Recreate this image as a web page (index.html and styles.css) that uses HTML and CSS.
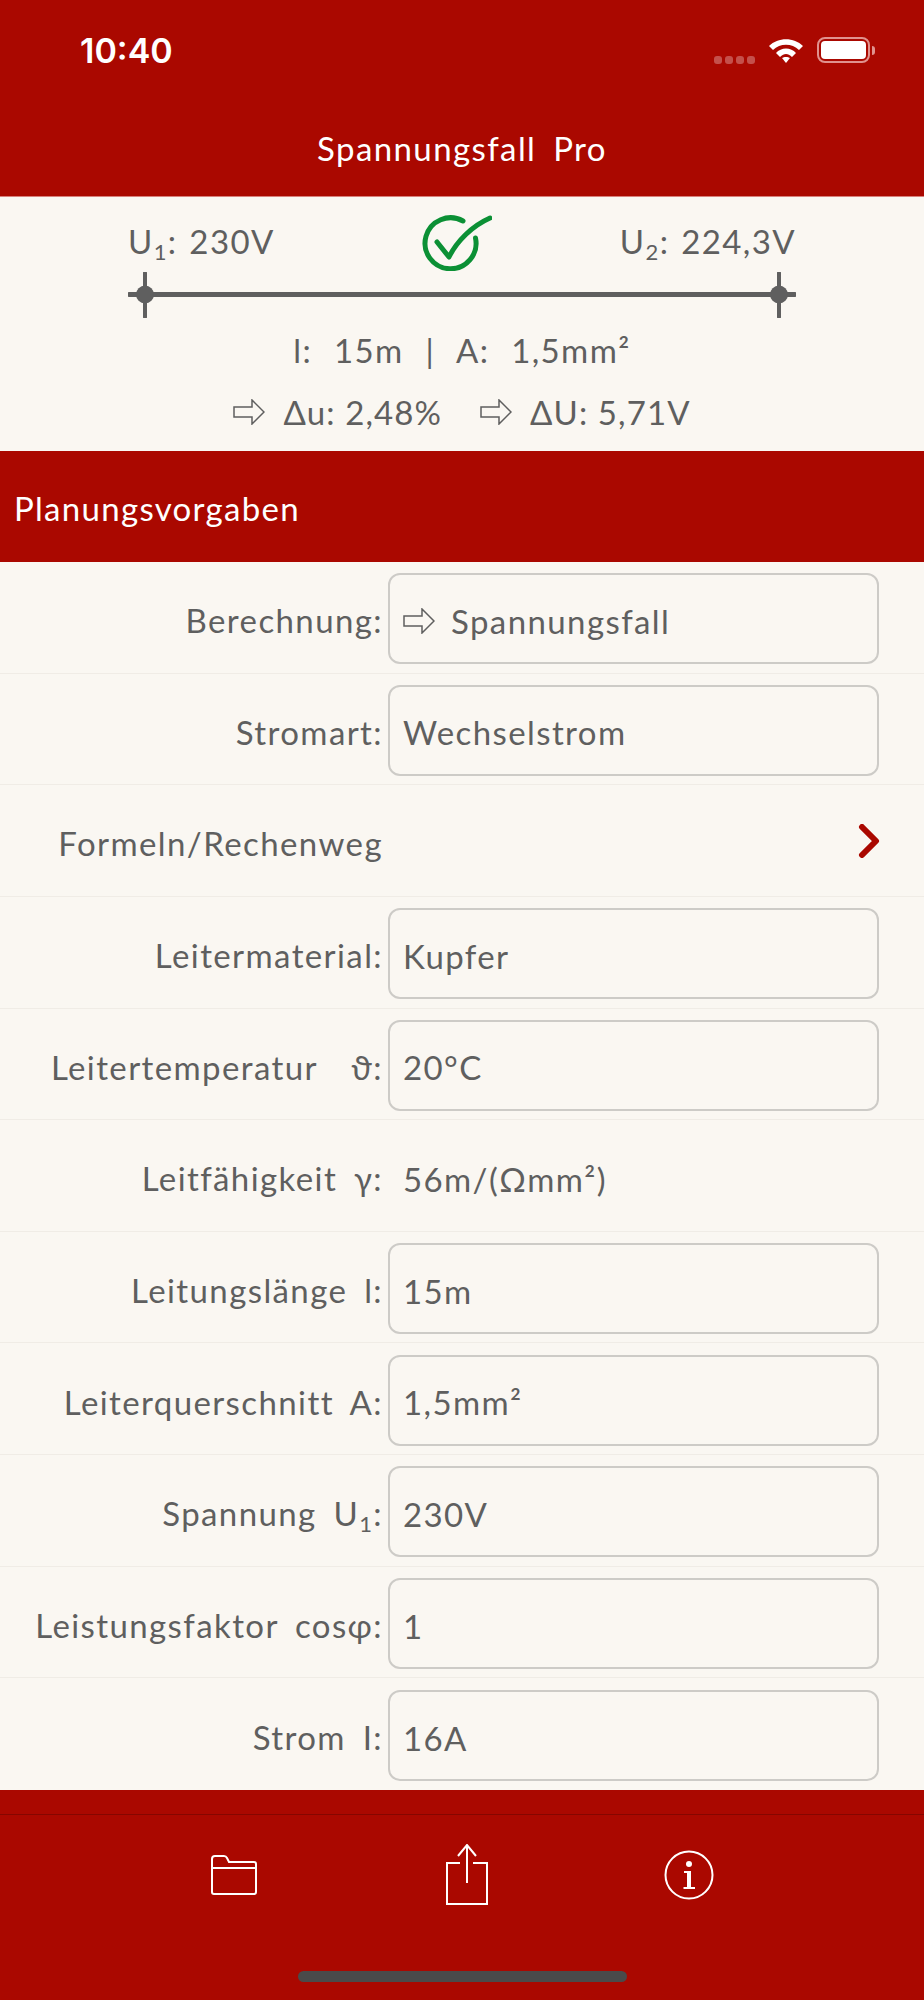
FILE: index.html
```html
<!DOCTYPE html>
<html lang="de">
<head>
    <meta charset="UTF-8">
    <meta name="viewport" content="width=device-width, initial-scale=1.0">
    <title>Spannungsfall Pro</title>
    <link rel="stylesheet" href="styles.css">
</head>
<body>
    <header class="app-header">
        <div class="status-bar">
            <span class="status-time">10:40</span>
            <div class="status-icons">
                <div class="signal-dots"><i></i><i></i><i></i><i></i></div>
                <svg class="wifi-icon" width="36" height="26" viewBox="0 0 36 26">
                    <path d="M1 9 C10 0 26 0 35 9 L31 13 C24 6 12 6 5 13 Z" fill="#fff"/>
                    <path d="M8 16 C13 10 23 10 28 16 L24 20 C20 16 16 16 12 20 Z" fill="#fff"/>
                    <path d="M14 21 C16 19.500 20 19.500 22 21 L18 26 Z" fill="#fff"/>
                </svg>
                <div class="battery"><div class="battery-fill"></div></div>
                <div class="battery-nub"></div>
            </div>
        </div>
        <div class="app-title">Spannungsfall Pro</div>
    </header>

    <section class="summary">
        <div class="voltage-row">
            <span>U<sub>1</sub>: 230V</span>
            <svg class="check-icon" width="70" height="56" viewBox="0 0 70 56">
                <path d="M41 6 A25.500 25.500 0 1 0 53.500 23" fill="none" stroke="#0b9035" stroke-width="5" stroke-linecap="round"/>
                <path d="M15 27 L27 42 C35 26 50 11 68 3" fill="none" stroke="#0b9035" stroke-width="5" stroke-linecap="round" stroke-linejoin="round"/>
            </svg>
            <span class="voltage-end">U<sub>2</sub>: 224,3V</span>
        </div>
        <svg class="wire" width="668" height="46" viewBox="0 0 668 46">
            <path d="M1 22.500 H667" stroke="#5f5f5f" stroke-width="5" stroke-linecap="round"/>
            <path d="M17 1 V45 M651 1 V45" stroke="#5f5f5f" stroke-width="4" stroke-linecap="round"/>
            <circle cx="17" cy="22.500" r="9" fill="#5f5f5f"/>
            <circle cx="651" cy="22.500" r="9" fill="#5f5f5f"/>
        </svg>
        <div class="summary-line length-line">l: 15m | A: 1,5mm²</div>
        <div class="summary-line result-line">
            <span class="result">
                <svg class="arrow-icon" width="32" height="26" viewBox="0 0 32 26"><path d="M1 8 H19 V1 L31 13 L19 25 V18 H1 Z" fill="none" stroke="#5f5f5f" stroke-width="1.500"/></svg>
                Δu: 2,48%
            </span>
            <span class="result">
                <svg class="arrow-icon" width="32" height="26" viewBox="0 0 32 26"><path d="M1 8 H19 V1 L31 13 L19 25 V18 H1 Z" fill="none" stroke="#5f5f5f" stroke-width="1.500"/></svg>
                ΔU: 5,71V
            </span>
        </div>
    </section>

    <h2 class="section-title">Planungsvorgaben</h2>

    <main class="form-list">
        <div class="form-row">
            <label>Berechnung:</label>
            <div class="field">
                <svg class="arrow-icon" width="32" height="26" viewBox="0 0 32 26"><path d="M1 8 H19 V1 L31 13 L19 25 V18 H1 Z" fill="none" stroke="#5f5f5f" stroke-width="1.500"/></svg>
                Spannungsfall
            </div>
        </div>
        <div class="form-row">
            <label>Stromart:</label>
            <div class="field">Wechselstrom</div>
        </div>
        <div class="form-row link-row">
            <label>Formeln/Rechenweg</label>
            <svg class="chevron" width="24" height="34" viewBox="0 0 24 34"><path d="M5 3 L19 17 L5 31" fill="none" stroke="#aa0800" stroke-width="6" stroke-linecap="round" stroke-linejoin="round"/></svg>
        </div>
        <div class="form-row">
            <label>Leitermaterial:</label>
            <div class="field">Kupfer</div>
        </div>
        <div class="form-row">
            <label>Leitertemperatur &nbsp;ϑ:</label>
            <div class="field">20°C</div>
        </div>
        <div class="form-row">
            <label>Leitfähigkeit γ:</label>
            <div class="field plain">56m/(Ωmm²)</div>
        </div>
        <div class="form-row">
            <label>Leitungslänge l:</label>
            <div class="field">15m</div>
        </div>
        <div class="form-row">
            <label>Leiterquerschnitt A:</label>
            <div class="field">1,5mm²</div>
        </div>
        <div class="form-row">
            <label>Spannung U<sub>1</sub>:</label>
            <div class="field">230V</div>
        </div>
        <div class="form-row">
            <label>Leistungsfaktor cosφ:</label>
            <div class="field">1</div>
        </div>
        <div class="form-row">
            <label>Strom I:</label>
            <div class="field">16A</div>
        </div>
    </main>

    <footer class="toolbar">
        <div class="toolbar-icons">
            <svg width="48" height="42" viewBox="0 0 48 42">
                <path d="M2 5 Q2 2 5 2 H14 Q16 2 17 4 L19 8 H44 Q46 8 46 10 V38 Q46 40 44 40 H4 Q2 40 2 38 Z M2 14 H46" fill="none" stroke="#fff" stroke-width="2"/>
            </svg>
            <svg width="44" height="62" viewBox="0 0 44 62">
                <path d="M15 19 H2 V60 H42 V19 H28" fill="none" stroke="#fff" stroke-width="2"/>
                <path d="M22 1 V39 M13 12 L22 1 L31 12" fill="none" stroke="#fff" stroke-width="2"/>
            </svg>
            <svg width="50" height="50" viewBox="0 0 50 50">
                <circle cx="25" cy="25" r="23.500" fill="none" stroke="#fff" stroke-width="2"/>
                <circle cx="25" cy="14" r="3" fill="#fff"/>
                <path d="M20 21 H27 V37 H31 V39 H19.500 V37 H23 V23 H20 Z" fill="#fff"/>
            </svg>
        </div>
        <div class="home-bar"></div>
    </footer>
</body>
</html>
```

FILE: styles.css
```css
html, body {
    margin: 0;
    padding: 0;
}
body {
    width: 924px;
    height: 2000px;
    display: flex;
    flex-direction: column;
    background-color: #faf7f2;
    color: #5f5f5f;
    font-family: "Lato", "Noto Sans", sans-serif;
    font-size: 33px;
    letter-spacing: 1.4px;
    word-spacing: 7px;
}
sub {
    font-size: 22px;
    line-height: 0;
    vertical-align: -6px;
}
.app-header {
    height: 196px;
    background-color: #aa0800;
    border-bottom: 1px solid #d9807b;
    color: #fff;
}
.status-bar {
    height: 100px;
    display: flex;
    justify-content: space-between;
    padding: 31px 49px 0 80px;
    box-sizing: border-box;
}
.status-time {
    font-family: "Inter", sans-serif;
    font-size: 34px;
    font-weight: 600;
    letter-spacing: 0;
    line-height: 40px;
}
.status-icons {
    display: flex;
    align-items: flex-start;
    padding-top: 6px;
}
.signal-dots {
    display: flex;
    gap: 3px;
    margin: 19px 13px 0 0;
}
.signal-dots i {
    width: 8px;
    height: 8px;
    border-radius: 3px;
    background-color: #c4504b;
}
.battery {
    width: 53px;
    height: 26px;
    margin-left: 13px;
    padding: 2px;
    box-sizing: border-box;
    border: 2px solid #e0928e;
    border-radius: 8px;
}
.battery-fill {
    height: 100%;
    background-color: #fff;
    border-radius: 4px;
}
.battery-nub {
    width: 3px;
    height: 9px;
    margin: 9px 0 0 2px;
    background-color: #e0928e;
    border-radius: 0 3px 3px 0;
}
.app-title {
    text-align: center;
    line-height: 50px;
    margin-top: 23px;
}
.summary {
    height: 254px;
    display: flex;
    flex-direction: column;
    align-items: center;
}
.voltage-row {
    width: 668px;
    height: 75px;
    display: grid;
    grid-template-columns: 1fr auto 1fr;
    align-items: start;
    line-height: 40px;
    padding-top: 24px;
    box-sizing: border-box;
    word-spacing: 2px;
}
.voltage-end {
    text-align: right;
}
.check-icon {
    margin: -6px 10px 0 0;
}
.wire {
    display: block;
}
.summary-line {
    display: flex;
    justify-content: center;
    line-height: 40px;
    margin-top: 12px;
}
.length-line {
    word-spacing: 12px;
}
.result-line {
    gap: 38px;
    margin-top: 22px;
    word-spacing: 0;
    letter-spacing: 1.1px;
}
.result {
    display: flex;
    align-items: center;
    gap: 18px;
}
.section-title {
    margin: 0;
    height: 111px;
    padding: 3px 0 0 14px;
    box-sizing: border-box;
    display: flex;
    align-items: center;
    background-color: #aa0800;
    color: #fff;
    font-size: 33px;
    font-weight: normal;
    letter-spacing: 1.3px;
}
.form-list {
    flex: 1;
    display: grid;
    grid-auto-rows: 1fr;
}
.form-row {
    display: grid;
    grid-template-columns: 383px 491px;
    column-gap: 5px;
    align-items: center;
    padding-top: 3px;
    box-sizing: border-box;
    border-bottom: 1px solid #f0ece6;
}
.form-row:last-child {
    border-bottom: none;
}
.form-row label {
    text-align: right;
    padding-top: 3px;
}
.link-row {
    padding: 0 43px 0 0;
    grid-template-columns: 383px 1fr;
}
.link-row label {
    padding-top: 5px;
}
.chevron {
    justify-self: end;
}
.field {
    height: 91px;
    box-sizing: border-box;
    padding: 4px 13px 0;
    display: flex;
    align-items: center;
    gap: 16px;
    border: 2px solid #cdcbc7;
    border-radius: 12px;
}
.field.plain {
    border-color: transparent;
}
.toolbar {
    height: 210px;
    background-color: #aa0800;
    display: flex;
    flex-direction: column;
    align-items: center;
}
.toolbar-icons {
    width: 100%;
    height: 92px;
    margin-top: 24px;
    border-top: 1px solid #850600;
    box-sizing: border-box;
    display: flex;
    align-items: center;
    padding: 29px 0 0 210px;
    column-gap: 187px;
}
.toolbar-icons svg:last-child {
    margin-left: -12px;
}
.home-bar {
    width: 329px;
    height: 11px;
    margin-top: 65px;
    background-color: #4a4a4a;
    border-radius: 6px;
}
```
